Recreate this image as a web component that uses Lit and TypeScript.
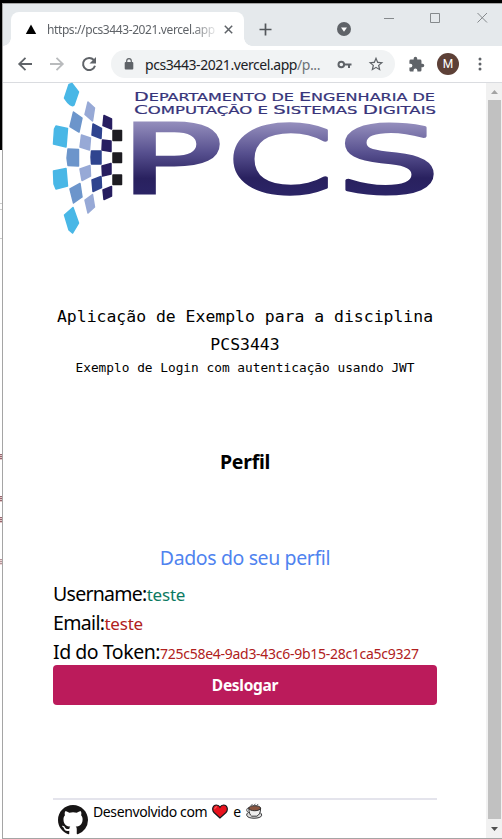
import { LitElement, html, css, svg } from "lit";
import { customElement } from "lit/decorators.js";

const TILES: Array<[string, string]> = [
  ["#49b7e6", "M72 83.500 L78.500 92 L74 105 Q71 108 64.500 98 L69 84.500 Z"],
  ["#49b7e6", "M56 126 L67.500 128.500 L66 147 L53.500 144 L54.500 129 Z"],
  ["#49b7e6", "M53.500 171 L66 168.500 L67.500 186 L56 189 L54 184 Z"],
  ["#49b7e6", "M64.500 215 L73 207.500 L78.500 223 L72.500 233 L69 230 Z"],
  ["#6c95cb", "M73.500 112 L82 118 L79 132 L70 126.500 Z"],
  ["#6c95cb", "M68 149 L78.500 149.500 L78.500 166 L68 165.500 L67 158 Z"],
  ["#6c95cb", "M70 189 L80 183.500 L82 197 L73.500 203 Z"],
  ["#97a9d6", "M88 102 L94.500 108 L92.500 121 L85 114.500 Z"],
  ["#97a9d6", "M81.500 135 L90.500 138 L89.500 150 L80 147 Z"],
  ["#97a9d6", "M80 169 L90 165.500 L90.500 176 L82 180.500 Z"],
  ["#97a9d6", "M85 200 L92.500 194.500 L94.500 207 L88 213 Z"],
  ["#2f448f", "M93 124 L101.500 128.500 L101 138.500 L92 135 Z"],
  ["#2f448f", "M91.500 151 H101 V164 H91.500 Q90.500 157 91.500 151 Z"],
  ["#2f448f", "M92 180 L101 176.500 L101.500 187.500 L93 191.500 Z"],
  ["#271e60", "M104 115.500 L111.500 119 V129 L103 125.500 Z"],
  ["#271e60", "M102.500 140 L111 141 V151.500 L102 150 Z"],
  ["#271e60", "M102 166 L111 163.500 V174 L102.500 176 Z"],
  ["#271e60", "M103 190 L111.500 186.500 V196 L104 199.500 Z"],
  ["#1e1d22", "M113 130.500 H121.500 V140.500 H113 Z"],
  ["#1e1d22", "M113 153 H121.500 V162.500 H113 Z"],
  ["#1e1d22", "M113 175 H121.500 V184.500 H113 Z"],
];

@customElement("pcs-logo")
class PcsLogo extends LitElement {
  static styles = css`
    :host { display: block; height: 151px; }
    svg { display: block; overflow: visible; }
    .small { font: 12.2px "DejaVu Sans", sans-serif; fill: #37347a; stroke: #37347a; stroke-width: 0.2; }
    .sc { font-size: 10.2px; }
    .big { font: 96px "DejaVu Sans", sans-serif; fill: url(#ink); stroke: url(#ink); stroke-width: 4.5; vector-effect: non-scaling-stroke; stroke-linejoin: round; }
    .p { stroke-linejoin: miter; }
  `;
  render() {
    const sc = (first: string, rest: string) => svg`<tspan>${first}</tspan><tspan class="sc">${rest}</tspan>`;
    return html`<svg width="384" height="151" viewBox="53 83 384 151">
      <defs><linearGradient id="ink" gradientUnits="userSpaceOnUse" x1="0" x2="0" y1="-74" y2="0">
        <stop offset="0" stop-color="#9993c0"></stop><stop offset=".45" stop-color="#57508f"></stop>
        <stop offset=".8" stop-color="#29215f"></stop><stop offset="1" stop-color="#2b2465"></stop>
      </linearGradient></defs>
      ${TILES.map(([c, d]) => svg`<path d=${d} fill=${c} stroke=${c} stroke-width="1.500" stroke-linejoin="round"></path>`)}
      <text class="small" x="134" y="101" textLength="301" lengthAdjust="spacingAndGlyphs">${sc("D", "EPARTAMENTO DE ")}${sc("E", "NGENHARIA DE")}</text>
      <text class="small" x="134" y="114" textLength="302" lengthAdjust="spacingAndGlyphs">${sc("C", "OMPUTAÇÃO E ")}${sc("S", "ISTEMAS ")}${sc("D", "IGITAIS")}</text>
      <text class="big p" transform="translate(119.200 193.200) scale(1.790 1)">P</text>
      <text class="big" transform="translate(227.500 192.500) scale(1.580 .97)">C</text>
      <text class="big" transform="translate(337 192.500) scale(1.690 .97)">S</text>
    </svg>`;
  }
}

@customElement("browser-bar")
class BrowserBar extends LitElement {
  static styles = css`
    :host { display: block; font-family: "Noto Sans", sans-serif; }
    svg { display: block; flex: none; }
    .strip { height: 42px; background: #e5e9ec; display: flex; align-items: flex-end; padding-left: 8px; }
    .tab { box-sizing: border-box; width: 233px; height: 34px; background: #fff; border-radius: 8px 8px 0 0; display: flex; align-items: center; padding: 0 11px 0 14px; position: relative; }
    .tab::before, .tab::after { content: ""; position: absolute; bottom: 0; width: 8px; height: 8px; }
    .tab::before { left: -8px; background: radial-gradient(circle at 0 0, transparent 7.5px, #fff 8px); }
    .tab::after { right: -8px; background: radial-gradient(circle at 100% 0, transparent 7.5px, #fff 8px); }
    .title { margin-left: 10px; width: 170px; white-space: nowrap; font-size: 12px; letter-spacing: -0.4px; color: #5f6368; -webkit-mask-image: linear-gradient(90deg, #000 145px, transparent 172px); }
    .close { margin-left: 7px; }
    .plus { margin: 0 0 10px 15px; }
    .drop { margin: 0 0 10px 65px; }
    .win { margin: 0 0 22px 32px; }
    .bar { height: 36px; background: #fff; display: flex; align-items: center; border-bottom: 1px solid #dadce0; }
    .nav { margin-left: 14px; }
    .omni { width: 284px; height: 28px; border-radius: 14px; background: #f1f3f4; margin-left: 13px; display: flex; align-items: center; }
    .lock { margin-left: 13px; }
    .url { margin-left: 11px; width: 178px; white-space: nowrap; font-size: 14px; letter-spacing: -0.43px; color: #202124; }
    .url span { color: #6d7176; }
    .key { margin-left: 14px; }
    .star { margin-left: 16px; }
    .puz { margin-left: 13px; }
    .avatar { margin-left: 12px; width: 22px; height: 22px; border-radius: 50%; background: #5d4037; color: #fff; font: 12px/22px Roboto, sans-serif; text-align: center; }
    .dots { margin-left: 19px; }
  `;
  render() {
    return html`
      <div class="strip">
        <div class="tab">
          <svg width="12" height="12" viewBox="0 0 12 12"><path d="M6 1.500 11.200 11H.8z"></path></svg>
          <div class="title">https://pcs3443-2021.vercel.app</div>
          <svg class="close" width="9" height="9" viewBox="0 0 9 9" stroke="#5f6368" stroke-width="1.500"><path d="M.8.8 8.200 8.200M8.200.8.8 8.200"></path></svg>
        </div>
        <svg class="plus" width="13" height="13" viewBox="0 0 13 13" stroke="#53575b" stroke-width="1.700"><path d="M6.500.5v12M.5 6.500h12"></path></svg>
        <svg class="drop" width="14" height="14" viewBox="0 0 14 14"><circle cx="7" cy="7" r="7" fill="#5f6368"></circle><path d="M4 5.500h6L7 9.700z" fill="#fff"></path></svg>
        <svg class="win" width="105" height="12" viewBox="0 0 105 12" fill="none" stroke="#85898c"><path d="M1 6.500h10M94.500 1l9.500 9.500M104 1l-9.500 9.500"></path><path d="M47.500 1.500h9v9h-9z"></path></svg>
      </div>
      <div class="bar">
        <svg class="nav" width="81" height="16" viewBox="0 0 81 16" fill="none" stroke-width="1.800">
          <path d="M15 8H2.500M8.500 1.800 2.200 8l6.300 6.200" stroke="#5f6368"></path>
          <path d="M33 8h12.500M39.500 1.800 45.800 8l-6.300 6.200" stroke="#b9bbbd"></path>
          <path d="M76.800 4A6.100 6.100 0 1 0 78 9.800" stroke="#5f6368" stroke-width="2"></path><path d="M79 1v6.500h-6.500z" fill="#5f6368"></path>
        </svg>
        <div class="omni">
          <svg class="lock" width="10" height="12" viewBox="0 0 10 12"><rect x=".7" y="4" width="8.600" height="7.500" rx="1" fill="#5f6368"></rect><path d="M2.700 4.500V3a2.300 2.300 0 0 1 4.600 0v1.500" fill="none" stroke="#5f6368" stroke-width="1.200"></path></svg>
          <div class="url">pcs3443-2021.vercel.app<span>/p...</span></div>
          <svg class="key" width="15" height="9" viewBox="0 0 15 9"><circle cx="4.300" cy="4.500" r="2.800" fill="none" stroke="#5f6368" stroke-width="2"></circle><path d="M7 3.500h7.500v2H13V8h-2V5.500H7z" fill="#5f6368"></path></svg>
          <svg class="star" width="16" height="16" viewBox="0 0 24 24" fill="#5f6368"><path d="M23 9.200 15.100 8.500 12 1.200 8.900 8.500 1 9.200l6 5.200L5.200 22 12 18l6.800 4-1.800-7.600zM12 16.200l-4.100 2.500L9 14 5.300 10.900l4.800-.4L12 6.100l1.900 4.400 4.800.4L15 14l1.100 4.700z"></path></svg>
        </div>
        <svg class="puz" width="17" height="17" viewBox="0 0 24 24" fill="#5f6368"><path d="M20.500 11H19V7a2 2 0 0 0-2-2h-4V3.500a2.500 2.500 0 0 0-5 0V5H4a2 2 0 0 0-2 2v3.800h1.500a2.700 2.700 0 0 1 0 5.400H2V20c0 1.100.9 2 2 2h3.800v-1.500a2.700 2.700 0 0 1 5.400 0V22H17a2 2 0 0 0 2-2v-4h1.500a2.500 2.500 0 0 0 0-5z"></path></svg>
        <div class="avatar">M</div>
        <svg class="dots" width="4" height="14" viewBox="0 0 4 14" fill="#5f6368"><circle cx="2" cy="2" r="1.500"></circle><circle cx="2" cy="7" r="1.500"></circle><circle cx="2" cy="12" r="1.500"></circle></svg>
      </div>`;
  }
}

@customElement("profile-page")
class ProfilePage extends LitElement {
  static styles = css`
    :host { display: flex; flex-direction: column; box-sizing: border-box; width: 483px; padding: 0 49px 0 50px; font-family: "Noto Sans", sans-serif; color: #000; white-space: nowrap; }
    .title { margin-top: 69px; text-align: center; font: 16.450px/28px "DejaVu Sans Mono", monospace; height: 56px; }
    .sub { margin-top: -1px; text-align: center; font: 12.800px/20px "DejaVu Sans Mono", monospace; }
    .h { margin-top: 70px; text-align: center; font-size: 19.500px; font-weight: 700; line-height: 28px; letter-spacing: -0.3px; }
    .data { margin-top: 67px; text-align: center; color: #4f83ef; font-size: 19.500px; line-height: 30px; letter-spacing: -0.38px; }
    .row { display: flex; align-items: baseline; height: 29px; line-height: 29px; font-size: 19.500px; letter-spacing: -0.45px; }
    .first { margin-top: 6px; letter-spacing: -0.72px; }
    .mail { letter-spacing: -0.65px; }
    .val { font-size: 17px; color: #b02020; letter-spacing: -0.2px; }
    .green { color: #0b7a62; }
    .id { font-size: 14px; letter-spacing: -0.28px; }
    .btn { height: 40px; margin-top: -1px; border-radius: 4px; background: #bb1b5b; color: #fff; font-weight: 700; font-size: 15.500px; line-height: 40px; text-align: center; letter-spacing: -0.3px; }
    .foot { margin-top: 93px; border-top: 2px solid #e4e4ec; display: flex; padding-left: 5px; height: 39px; }
    .gh { margin-top: 5px; }
    .made { display: flex; margin-left: 5px; height: 22px; align-items: center; font-size: 14px; letter-spacing: -0.38px; }
    .heart { margin: 0 5px; }
    .cup { margin-left: 5px; }
    svg { display: block; flex: none; }
  `;
  render() {
    return html`
      <pcs-logo></pcs-logo>
      <div class="title">Aplicação de Exemplo para a disciplina<br />PCS3443</div>
      <div class="sub">Exemplo de Login com autenticação usando JWT</div>
      <div class="h">Perfil</div>
      <div class="data">Dados do seu perfil</div>
      <div class="row first">Username:<span class="val green">teste</span></div>
      <div class="row mail">Email:<span class="val">teste</span></div>
      <div class="row">Id do Token:<span class="val id">725c58e4-9ad3-43c6-9b15-28c1ca5c9327</span></div>
      <div class="btn">Deslogar</div>
      <div class="foot">
        <svg class="gh" width="30" height="30" viewBox="0 0 16 16" fill="#171515"><path d="M8 0C3.580 0 0 3.580 0 8c0 3.540 2.290 6.530 5.470 7.590.4.070.55-.17.55-.38 0-.19-.01-.82-.01-1.490-2.010.37-2.530-.49-2.690-.94-.09-.23-.48-.94-.82-1.130-.28-.15-.68-.52-.01-.53.63-.01 1.080.58 1.230.82.72 1.210 1.870.87 2.330.66.07-.52.28-.87.51-1.070-1.780-.2-3.640-.89-3.640-3.950 0-.87.31-1.590.82-2.150-.08-.2-.36-1.020.08-2.120 0 0 .67-.21 2.200.82.64-.18 1.320-.27 2-.27s1.360.09 2 .27c1.530-1.040 2.200-.82 2.200-.82.44 1.100.16 1.920.08 2.120.51.56.82 1.270.82 2.150 0 3.070-1.870 3.750-3.650 3.950.29.25.54.73.54 1.480 0 1.070-.01 1.930-.01 2.200 0 .21.15.46.55.38A8.010 8.010 0 0 0 16 8c0-4.420-3.580-8-8-8z"></path></svg>
        <div class="made">Desenvolvido com
          <svg class="heart" width="16" height="15" viewBox="0 0 16 15"><path d="M8 14 2 8.500C-.5 5.500.8 1 4.400 1 6.200 1 7.400 2 8 3.200 8.600 2 9.800 1 11.600 1c3.600 0 4.900 4.500 2.400 7.500z" fill="#e8121d" stroke="#17191c" stroke-width="1.200"></path><path d="M2.700 5.200Q2.800 2.700 5 2.700" fill="none" stroke="#f47a70" stroke-width="1"></path></svg>
          e
          <svg class="cup" width="17" height="16" viewBox="0 0 18 17" stroke="#27292b"><path d="M1.800 10.500Q.2 11.500.9 13.500 2 16 8.500 16.200 15.500 16 16.500 13.500 17 11.500 14.800 10" fill="#ddd"></path><path d="M3.500 5C-.2 5-.2 10.300 4 10.300" fill="none"></path><path d="M3 5.500Q3 12 6 14h5.500Q15.500 12 15.500 5.500z" fill="#eee"></path><ellipse cx="9.200" cy="5.500" rx="6.300" ry="2.700" fill="#8a5640"></ellipse><path d="M6 4Q4.500 2.500 7 1M9 4Q7.500 2.500 10 .8M12 4Q10.500 2.500 13 1" fill="none" stroke="#55585a"></path></svg>
        </div>
      </div>`;
  }
}

@customElement("app-root")
class AppRoot extends LitElement {
  static styles = css`
    :host { display: flex; flex-direction: column; width: 502px; height: 839px; background: #fff; overflow: hidden; }
    .top { height: 3px; background: #000; flex: none; }
    .main { display: flex; height: 836px; }
    .side { width: 2px; overflow: hidden; position: relative; flex: none; }
    .dark { height: 147px; background: #000; }
    .tick { position: absolute; left: 0; width: 2px; height: 1px; background: #ccc; }
    .t1 { top: 200px; } .t2 { top: 206px; } .t3 { top: 235px; }
    .bit { position: absolute; left: 0; width: 2px; height: 6px; background: repeating-linear-gradient(#95666f 0 1px, #e4c8c8 1px 2px); }
    .b1 { top: 451px; } .b2 { top: 493px; } .b3 { top: 514px; } .b4 { top: 556px; opacity: .7; }
    .window { box-sizing: border-box; width: 500px; height: 836px; border: 1px solid #a5a5a5; border-right: 0; }
    .view { display: flex; height: 755px; }
    .scroll { width: 16px; background: #f1f1f1; display: flex; flex-direction: column; align-items: center; }
    .scroll svg { display: block; }
    .thumb { width: 13px; height: 719px; background: #c1c1c1; margin-left: 1px; }
  `;
  render() {
    return html`
      <div class="top"></div>
      <div class="main">
        <div class="side"><div class="dark"></div>
          <i class="tick t1"></i><i class="tick t2"></i><i class="tick t3"></i>
          <i class="bit b1"></i><i class="bit b2"></i><i class="bit b3"></i><i class="bit b4"></i>
        </div>
        <div class="window">
          <browser-bar></browser-bar>
          <div class="view">
            <profile-page></profile-page>
            <div class="scroll">
              <svg width="16" height="17" viewBox="0 0 16 17"><path d="M5 11h7L8.500 7z" fill="#a3a3a3"></path></svg>
              <div class="thumb"></div>
              <svg width="16" height="19" viewBox="0 0 16 19"><path d="M5 8h7l-3.500 4z" fill="#505050"></path></svg>
            </div>
          </div>
        </div>
      </div>`;
  }
}
